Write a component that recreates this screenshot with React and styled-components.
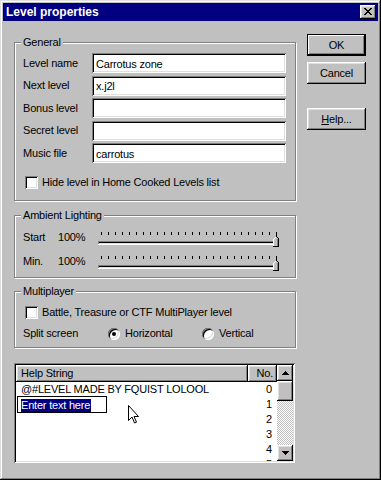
import React from "react";
import styled, { createGlobalStyle, css } from "styled-components";

const FACE = "#c0c0c0";

const Global = createGlobalStyle`
  html, body { margin: 0; padding: 0; background: ${FACE}; }
  body {
    font-family: "Liberation Sans", Arial, sans-serif;
    font-size: 11px;
    color: #000;
  }
  * { box-sizing: border-box; }
`;

const Window = styled.div`
  position: relative;
  width: 381px;
  height: 480px;
  padding: 3px;
  background: ${FACE};
  box-shadow: inset -1px -1px 0 #000, inset 1px 1px 0 #dfdfdf,
    inset -2px -2px 0 #808080, inset 2px 2px 0 #fff;
  overflow: hidden;
  letter-spacing: -0.2px;
`;

const TitleBar = styled.div`
  height: 18px;
  display: flex;
  align-items: center;
  justify-content: space-between;
  padding: 0 2px 0 3px;
  background: #000080;
`;

const Title = styled.span`
  color: #fff;
  font-weight: bold;
  font-size: 12px;
  letter-spacing: 0;
  line-height: 14px;
`;

const raised = css`
  background: ${FACE};
  box-shadow: inset -1px -1px 0 #000, inset 1px 1px 0 #fff,
    inset -2px -2px 0 #808080, inset 2px 2px 0 #dfdfdf;
`;

const sunken = css`
  background: #fff;
  box-shadow: inset 1px 1px 0 #808080, inset -1px -1px 0 #fff,
    inset 2px 2px 0 #000, inset -2px -2px 0 #dfdfdf;
`;

const CloseButton = styled.div`
  ${raised};
  width: 16px;
  height: 14px;
  display: flex;
  align-items: flex-start;
  justify-content: flex-start;
  padding: 3px 0 0 4px;
`;

const Body = styled.div`
  display: grid;
  grid-template-columns: 282px 59px;
  column-gap: 11px;
  padding-left: 11px;
  align-items: start;
`;

const LeftColumn = styled.div`
  display: flex;
  flex-direction: column;
  padding-top: 21px;
`;

const Group = styled.div`
  position: relative;
  border: 1px solid #808080;
  box-shadow: inset 1px 1px 0 #fff, 1px 1px 0 #fff;
  padding: ${(p) => p.$pad};
  margin-top: ${(p) => p.$mt || 0}px;
`;

const GroupLabel = styled.span`
  position: absolute;
  top: -7px;
  left: 6px;
  padding: 0 2px;
  line-height: 13px;
  background: ${FACE};
`;

const FieldGrid = styled.div`
  display: grid;
  grid-template-columns: 69px 1fr;
  grid-auto-rows: 20px;
  row-gap: 2.5px;
  align-items: center;
`;

const FieldLabel = styled.span`
  line-height: 13px;
`;

const TextBox = styled.div`
  ${sunken};
  height: 20px;
  display: flex;
  align-items: center;
  padding: 1px 4px 0 4px;
  white-space: nowrap;
`;

const CheckRow = styled.div`
  display: flex;
  align-items: center;
  gap: 4px;
  height: 13px;
  padding-left: 2px;
  margin-top: ${(p) => p.$mt || 0}px;
  line-height: 13px;
`;

const CheckBox = styled.span`
  ${sunken};
  width: 13px;
  height: 13px;
  flex: none;
`;

const SliderRow = styled.div`
  display: grid;
  grid-template-columns: 35px 39px 182px;
  align-items: start;
  height: 16px;
  margin-top: ${(p) => p.$mt || 0}px;
  line-height: 13px;
`;

const RadioRow = styled.div`
  display: flex;
  align-items: center;
  height: 13px;
  margin-top: 8px;
  line-height: 13px;
`;

const RadioLabel = styled.span`
  width: 85px;
`;

const RadioOption = styled.span`
  display: inline-flex;
  align-items: center;
  gap: 5px;
  width: ${(p) => p.$w || "auto"};
`;

const Radio = styled.span`
  position: relative;
  width: 12px;
  height: 12px;
  border-radius: 50%;
  flex: none;
  background: #fff;
  box-shadow: inset 1px 1px 0 #808080, inset -1px -1px 0 #fff,
    inset 2px 2px 0 #000, inset -2px -2px 0 #dfdfdf;
  &::after {
    content: "";
    display: ${(p) => (p.$checked ? "block" : "none")};
    position: absolute;
    left: 4px;
    top: 4px;
    width: 4px;
    height: 4px;
    border-radius: 50%;
    background: #000;
  }
`;

const ListView = styled.div`
  ${sunken};
  margin-top: 15px;
  width: 281px;
  height: 100px;
  padding: 2px;
  display: flex;
`;

const Table = styled.div`
  flex: 1;
  display: flex;
  flex-direction: column;
  overflow: hidden;
`;

const HeaderRow = styled.div`
  display: grid;
  grid-template-columns: 232px 29px;
  height: 17px;
  flex: none;
`;

const HeaderCell = styled.div`
  ${raised};
  display: flex;
  align-items: center;
  justify-content: ${(p) => (p.$right ? "flex-end" : "flex-start")};
  padding: 0 ${(p) => (p.$right ? "4px" : "0")} 0 ${(p) => (p.$right ? "0" : "5px")};
  line-height: 13px;
`;

const Rows = styled.div`
  position: relative;
  flex: 1;
  background: #fff;
  overflow: hidden;
  padding-top: 0;
`;

const Row = styled.div`
  display: grid;
  grid-template-columns: 232px 29px;
  height: 15px;
  align-items: center;
  line-height: 13px;
`;

const Cell = styled.span`
  padding: 0 ${(p) => (p.$right ? "5px" : "0")} 0 ${(p) => (p.$right ? "0" : "5px")};
  text-align: ${(p) => (p.$right ? "right" : "left")};
  white-space: nowrap;
`;

const EditBox = styled.div`
  position: absolute;
  left: 1px;
  top: 14px;
  width: 90px;
  height: 17px;
  border: 1px solid #000;
  background: #fff;
  padding: 2px 3px;
`;

const Selected = styled.span`
  display: inline-block;
  background: #000080;
  color: #fff;
  line-height: 13px;
  height: 13px;
  padding-right: 1px;
`;

const ScrollBar = styled.div`
  width: 16px;
  flex: none;
  display: flex;
  flex-direction: column;
`;

const ScrollButton = styled.div`
  ${raised};
  width: 16px;
  height: ${(p) => p.$h || 16}px;
  flex: none;
  display: flex;
  align-items: center;
  justify-content: center;
`;

const Track = styled.div`
  flex: 1;
  background-color: ${FACE};
  background-image: repeating-conic-gradient(#fff 0 25%, ${FACE} 0 50%);
  background-size: 2px 2px;
`;

const ButtonColumn = styled.div`
  display: flex;
  flex-direction: column;
  padding-top: 13px;
`;

const Button = styled.div`
  ${raised};
  width: 59px;
  height: 22px;
  display: flex;
  align-items: center;
  justify-content: center;
  margin-top: ${(p) => p.$mt || 0}px;
  line-height: 13px;
  ${(p) =>
    p.$default &&
    css`
      box-shadow: inset 0 0 0 1px #000, inset -2px -2px 0 #000,
        inset 2px 2px 0 #fff, inset -3px -3px 0 #808080;
    `}
`;

const CursorWrap = styled.div`
  position: absolute;
  left: 128px;
  top: 405px;
  width: 12px;
  height: 19px;
`;

const CloseGlyph = () => {
  const rows = [
    [0, 1, 6, 7],
    [1, 2, 5, 6],
    [2, 3, 4, 5],
    [3, 4],
    [2, 3, 4, 5],
    [1, 2, 5, 6],
    [0, 1, 6, 7],
  ];
  return (
    <svg width="8" height="7" viewBox="0 0 8 7" shapeRendering="crispEdges">
      {rows.flatMap((r, y) =>
        r.map((x) => <rect key={`${x}-${y}`} x={x} y={y} width="1" height="1" fill="#000" />)
      )}
    </svg>
  );
};

const Arrow = ({ down }) => (
  <svg width="7" height="4" viewBox="0 0 7 4" shapeRendering="crispEdges">
    {[0, 1, 2, 3].map((i) => {
      const w = 1 + i * 2;
      const y = down ? 3 - i : i;
      return <rect key={i} x={3 - i} y={y} width={w} height="1" fill="#000" />;
    })}
  </svg>
);

const Slider = () => {
  const ticks = Array.from({ length: 26 }, (_, i) => 4 + i * 7);
  return (
    <svg width="182" height="16" viewBox="0 0 182 16" shapeRendering="crispEdges">
      {ticks.map((x, i) => (
        <rect key={i} x={x} y={1} width="1" height={i === 25 ? 5 : 3} fill="#000" />
      ))}
      <rect x="1" y="10" width="180" height="1" fill="#808080" />
      <rect x="1" y="10" width="1" height="4" fill="#808080" />
      <rect x="2" y="11" width="178" height="1" fill="#000" />
      <rect x="2" y="12" width="178" height="1" fill="#dfdfdf" />
      <rect x="1" y="13" width="181" height="1" fill="#fff" />
      <polygon points="176,8 179,5 182,8 182,15 176,15" fill={FACE} />
      <polyline points="176.5,15 176.5,8.5 179.5,5.5" fill="none" stroke="#fff" strokeWidth="1" />
      <polyline points="179.5,5.5 181.5,7.5 181.5,15.5 176,15.5" fill="none" stroke="#000" strokeWidth="1" />
      <rect x="180" y="8" width="1" height="7" fill="#808080" />
    </svg>
  );
};

const Cursor = () => (
  <svg width="12" height="19" viewBox="0 0 12 19">
    <path
      d="M0.5 0.5 L0.5 15.5 L4 12 L6.5 18 L8.5 17.2 L6 11.5 L10.5 11.5 Z"
      fill="#fff"
      stroke="#000"
      strokeWidth="1"
      strokeLinejoin="miter"
    />
  </svg>
);

const fields = [
  ["Level name", "Carrotus zone"],
  ["Next level", "x.j2l"],
  ["Bonus level", ""],
  ["Secret level", ""],
  ["Music file", "carrotus"],
];

const rows = ["@#LEVEL MADE BY FQUIST LOLOOL", "", "", "", "", ""];

export default function App() {
  return (
    <>
      <Global />
      <Window>
        <TitleBar>
          <Title>Level properties</Title>
          <CloseButton>
            <CloseGlyph />
          </CloseButton>
        </TitleBar>
        <Body>
          <LeftColumn>
            <Group $pad="10px 9px 11px 8px">
              <GroupLabel>General</GroupLabel>
              <FieldGrid>
                {fields.map(([label, value]) => (
                  <React.Fragment key={label}>
                    <FieldLabel>{label}</FieldLabel>
                    <TextBox>{value}</TextBox>
                  </React.Fragment>
                ))}
              </FieldGrid>
              <CheckRow $mt={13}>
                <CheckBox />
                <span>Hide level in Home Cooked Levels list</span>
              </CheckRow>
            </Group>

            <Group $mt={14} $pad="15px 9px 6px 8px">
              <GroupLabel>Ambient Lighting</GroupLabel>
              <SliderRow>
                <span>Start</span>
                <span>100%</span>
                <Slider />
              </SliderRow>
              <SliderRow $mt={8}>
                <span>Min.</span>
                <span>100%</span>
                <Slider />
              </SliderRow>
            </Group>

            <Group $mt={13} $pad="14px 9px 7px 8px">
              <GroupLabel>Multiplayer</GroupLabel>
              <CheckRow>
                <CheckBox />
                <span>Battle, Treasure or CTF MultiPlayer level</span>
              </CheckRow>
              <RadioRow>
                <RadioLabel>Split screen</RadioLabel>
                <RadioOption $w="94px">
                  <Radio $checked />
                  <span>Horizontal</span>
                </RadioOption>
                <RadioOption>
                  <Radio />
                  <span>Vertical</span>
                </RadioOption>
              </RadioRow>
            </Group>

            <ListView>
              <Table>
                <HeaderRow>
                  <HeaderCell>Help String</HeaderCell>
                  <HeaderCell $right>No.</HeaderCell>
                </HeaderRow>
                <Rows>
                  {rows.map((text, i) => (
                    <Row key={i}>
                      <Cell>{text}</Cell>
                      <Cell $right>{i}</Cell>
                    </Row>
                  ))}
                  <EditBox>
                    <Selected>Enter text here</Selected>
                  </EditBox>
                </Rows>
              </Table>
              <ScrollBar>
                <ScrollButton>
                  <Arrow />
                </ScrollButton>
                <ScrollButton $h={20} />
                <Track />
                <ScrollButton>
                  <Arrow down />
                </ScrollButton>
              </ScrollBar>
            </ListView>
          </LeftColumn>

          <ButtonColumn>
            <Button $default>OK</Button>
            <Button $mt={6}>Cancel</Button>
            <Button $mt={24}>
              <span>
                <u>H</u>elp...
              </span>
            </Button>
          </ButtonColumn>
        </Body>
        <CursorWrap>
          <Cursor />
        </CursorWrap>
      </Window>
    </>
  );
}
